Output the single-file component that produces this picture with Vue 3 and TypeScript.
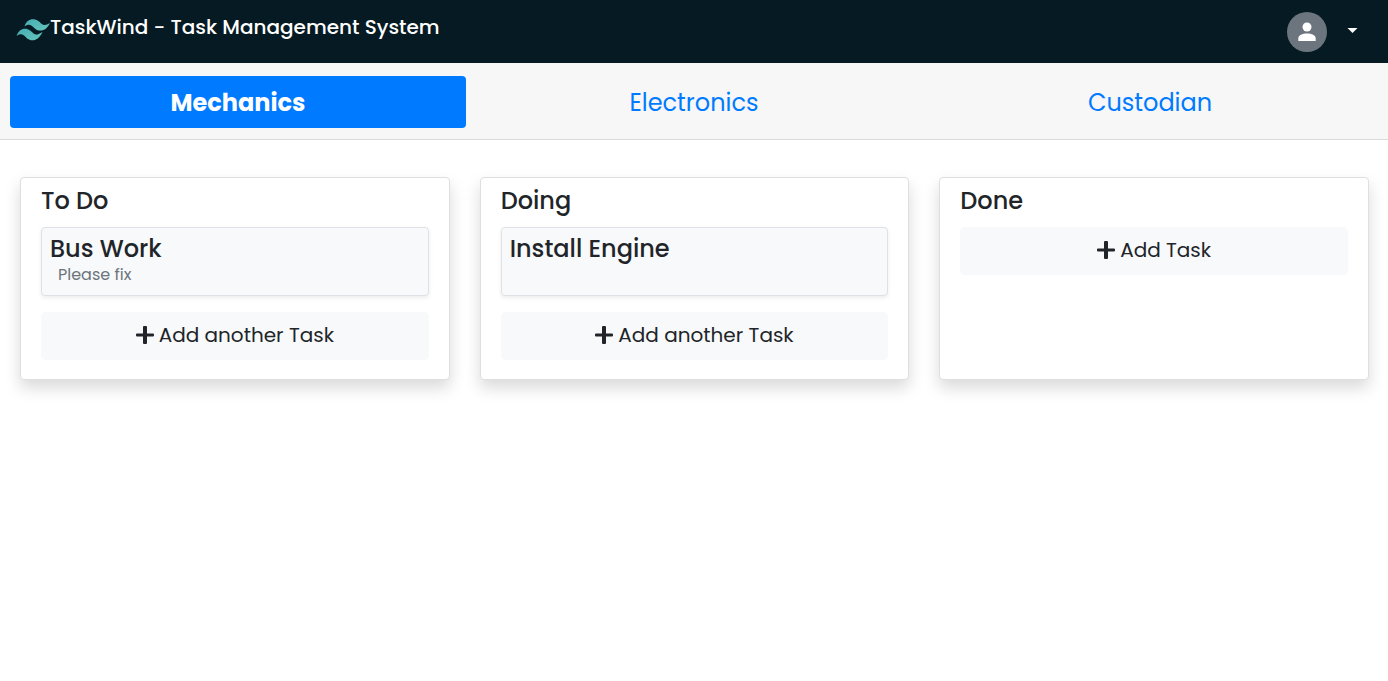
<script setup lang="ts">
import { ref } from 'vue'

interface Task {
  title: string
  note: string
}
interface Column {
  name: string
  tasks: Task[]
}

const departments: string[] = ['Mechanics', 'Electronics', 'Custodian']
const active = ref('Mechanics')

const columns: Column[] = [
  { name: 'To Do', tasks: [{ title: 'Bus Work', note: 'Please fix' }] },
  { name: 'Doing', tasks: [{ title: 'Install Engine', note: '' }] },
  { name: 'Done', tasks: [] },
]
</script>

<template>
  <div class="page">
    <header class="topbar">
      <a class="brand" href="#">
        <svg class="logo" viewBox="0 0 34 22" aria-hidden="true">
          <defs>
            <linearGradient id="wind" x1="0" y1="0" x2="1" y2="1">
              <stop offset="0" stop-color="#45adb3" />
              <stop offset="1" stop-color="#66c6bd" />
            </linearGradient>
          </defs>
          <path
            fill="url(#wind)"
            d="M8.500 7.500C10 2.500 13 0.300 17 0.300C21 0.300 23 2.500 25.500 4.800C28 6.800 30.500 6 34 4C31.500 9 28.500 11.600 24.500 11.600C20 11.600 18.500 9 16 7C13.500 5 11 5.600 8.500 7.500Z"
          />
          <path
            fill="url(#wind)"
            d="M0.500 17C2.500 12 5 9.800 9 9.800C13 9.800 15 12.200 17.500 14.500C20 16.500 22.500 15.500 26.500 13C24 18.500 20.500 21.300 16.500 21.300C12 21.300 10.500 18.500 8 16.500C5.500 14.500 3 15.200 0.500 17Z"
          />
        </svg>
        <span>TaskWind - Task Management System</span>
      </a>
      <button class="account" type="button" aria-label="Account menu">
        <span class="avatar">
          <svg viewBox="0 0 24 24" aria-hidden="true">
            <circle cx="12" cy="7" r="4.500" fill="#fff" />
            <path fill="#fff" d="M3.300 21v-2.500c0-3.500 4-5 8.700-5s8.700 1.500 8.700 5V21Z" />
          </svg>
        </span>
        <svg class="caret" viewBox="0 0 10 5" aria-hidden="true">
          <path fill="#fff" d="M0 0h10L5 5Z" />
        </svg>
      </button>
    </header>

    <nav class="tabs" aria-label="Departments">
      <a
        v-for="name in departments"
        :key="name"
        href="#"
        class="tab"
        :class="{ active: name === active }"
        :aria-current="name === active ? 'page' : undefined"
        @click.prevent="active = name"
        >{{ name }}</a
      >
    </nav>

    <main class="board">
      <section v-for="column in columns" :key="column.name" class="column">
        <h2 class="column-title">{{ column.name }}</h2>
        <article v-for="task in column.tasks" :key="task.title" class="task">
          <h3 class="task-title">{{ task.title }}</h3>
          <p class="task-note">{{ task.note }}</p>
        </article>
        <button class="add" type="button">
          <svg class="plus" viewBox="0 0 18 18" aria-hidden="true">
            <path
              fill="#212529"
              d="M8 0h2q1 0 1 1v6.500h6q1 0 1 1v1q0 1-1 1h-6V17q0 1-1 1H8q-1 0-1-1v-6.500H1q-1 0-1-1v-1q0-1 1-1h6V1q0-1 1-1Z"
            />
          </svg>
          <span>{{ column.tasks.length ? 'Add another Task' : 'Add Task' }}</span>
        </button>
      </section>
    </main>
  </div>
</template>

<style>
body {
  margin: 0;
  background: #fff;
}
</style>

<style scoped>
.page,
.page * {
  box-sizing: border-box;
}
.page {
  font-family: Poppins, Inter, 'Open Sans', sans-serif;
  color: #212529;
}
.topbar {
  display: flex;
  justify-content: space-between;
  align-items: flex-start;
  min-height: 63px;
  padding: 12px 30px 0 16px;
  background: #051a22;
}
.brand {
  display: flex;
  align-items: center;
  color: #fff;
  font-size: 20px;
  font-weight: 500;
  line-height: 31px;
  text-decoration: none;
}
.logo {
  width: 34px;
  height: 22px;
  margin-top: 4px;
}
.account {
  display: flex;
  align-items: center;
  gap: 20px;
  padding: 0;
  border: 0;
  background: none;
  cursor: pointer;
}
.avatar {
  display: flex;
  align-items: center;
  justify-content: center;
  width: 40px;
  height: 40px;
  border-radius: 50%;
  background: #6c757d;
}
.avatar svg {
  width: 24px;
  height: 24px;
}
.caret {
  width: 11px;
  height: 5px;
  margin-bottom: 3px;
}
.tabs {
  display: flex;
  padding: 13px 10px 11px;
  background: #f7f7f7;
  border-bottom: 1px solid #dcdcdc;
}
.tab {
  flex: 1;
  padding-top: 2px;
  border-radius: 4px;
  color: #007bff;
  font-size: 24px;
  line-height: 50px;
  text-align: center;
  text-decoration: none;
}
.tab.active {
  background: #007bff;
  color: #fff;
  font-weight: 700;
}
.board {
  display: grid;
  grid-template-columns: repeat(3, 1fr);
  gap: 30px;
  padding: 37px 19px 37px 20px;
}
.column {
  padding: 9px 20px 19px;
  border: 1px solid #dfdfdf;
  border-radius: 4px;
  background: #fff;
  box-shadow: 0 8px 16px rgba(0, 0, 0, 0.15);
}
.column-title,
.task-title {
  margin: 0;
  font-size: 24px;
  font-weight: 500;
  line-height: 28px;
}
.column-title {
  margin-bottom: 12px;
}
.task {
  min-height: 69px;
  margin-bottom: 16px;
  padding: 7px 8px;
  border: 1px solid #dee2e6;
  border-radius: 4px;
  background: #f8f9fa;
  box-shadow: 0 2px 4px rgba(0, 0, 0, 0.075);
}
.task-note {
  margin: 0 8px;
  color: #6c757d;
  font-size: 16px;
  line-height: 24px;
}
.add {
  display: flex;
  align-items: center;
  justify-content: center;
  gap: 5px;
  width: 100%;
  height: 48px;
  padding: 0 0 2px;
  border: 0;
  border-radius: 5px;
  background: #f8f9fa;
  color: #212529;
  font: inherit;
  font-size: 20px;
  cursor: pointer;
}
.plus {
  width: 18px;
  height: 18px;
}
</style>
